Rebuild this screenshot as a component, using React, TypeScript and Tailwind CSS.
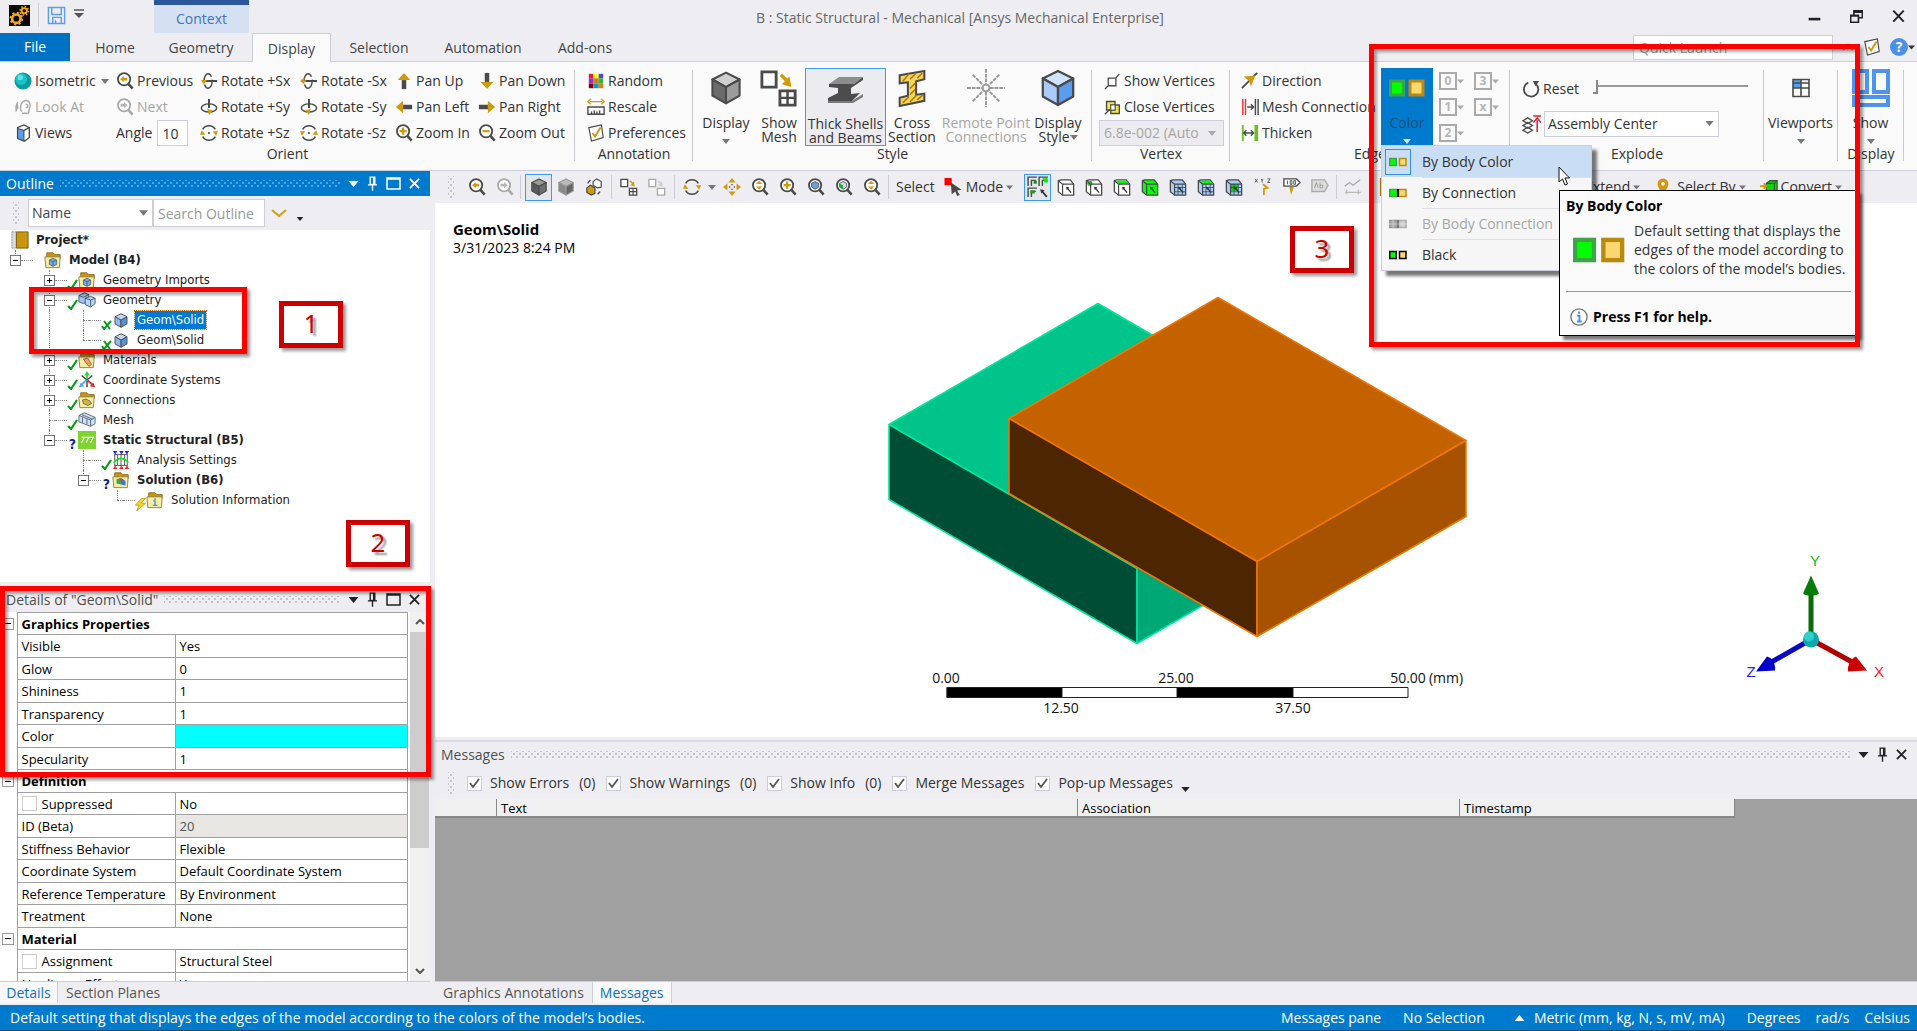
import type { ReactNode } from "react";
import clsx from "clsx";

/* ---------- icons ---------- */

type SvgProps = { className?: string; children: ReactNode; box?: string };

function Svg({ className = "size-[18px]", children, box = "0 0 20 20" }: SvgProps) {
  return (
    <svg viewBox={box} className={clsx("shrink-0", className)} fill="none" aria-hidden="true">
      {children}
    </svg>
  );
}

function Caret({ className = "h-[6px] w-[9px] text-[#777]" }: { className?: string }) {
  return (
    <svg viewBox="0 0 10 6" className={clsx("shrink-0", className)} aria-hidden="true">
      <path d="M0 0h10L5 6z" fill="currentColor" />
    </svg>
  );
}

const GOLD = "#cf9b0e";
const DARK = "#4a4a4a";

function Lens({ kind, muted, className }: { kind: string; muted?: boolean; className?: string }) {
  const ink = muted ? "#a8a8a8" : DARK;
  const gold = muted ? "#b5b5b5" : GOLD;
  return (
    <Svg className={className}>
      <circle cx="9" cy="8" r="6.8" stroke={ink} strokeWidth="2" fill="#fff" />
      <path d="M13.500 13l5 5.500" stroke={ink} strokeWidth="2.800" />
      {kind === "back" && <path d="M4.500 8l4-3.500v2h4v3h-4v2z" fill={gold} />}
      {kind === "next" && <path d="M13 8L9 4.500v2H5v3h4v2z" fill={gold} />}
      {kind === "plus" && <path d="M9 4v8M5 8h8" stroke={gold} strokeWidth="2.400" />}
      {kind === "minus" && <path d="M5 8h8" stroke={gold} strokeWidth="2.400" />}
      {kind === "updown" && <path d="M9 3l3.500 3.600h-7zM9 13l3.500-3.600h-7z" fill={gold} />}
      {kind === "blue" && <path d="M9 4l4 2v4l-4 2.500L5 10V6z" fill="#6f9fd8" stroke="#456" />}
      {kind === "green" && (
        <>
          <path d="M9 4l4 2v4l-4 2.500L5 10V6z" fill="#ddd" stroke="#456" />
          <path d="M5 6l4 2v4.500L5 10z" fill="#1fae3b" />
        </>
      )}
    </Svg>
  );
}

function Cube({
  top,
  left,
  right,
  stroke = DARK,
  className,
}: {
  top: string;
  left: string;
  right: string;
  stroke?: string;
  className?: string;
}) {
  return (
    <Svg className={className}>
      <g stroke={stroke} strokeWidth="1.200" strokeLinejoin="round">
        <path d="M10 1l8 4-8 4.500L2 5z" fill={top} />
        <path d="M2 5l8 4.500V19l-8-4.500z" fill={left} />
        <path d="M18 5l-8 4.500V19l8-4.500z" fill={right} />
      </g>
    </Svg>
  );
}

function Rotate({ axis, flip }: { axis: "x" | "y" | "z"; flip?: boolean }) {
  return (
    <Svg className="h-[20px] w-[18px]">
      {axis === "x" && (
        <>
          <ellipse cx="9" cy="10" rx="4.500" ry="8" stroke={DARK} strokeWidth="1.600" strokeDasharray="16 3" />
          <path d="M6 10h13" stroke={DARK} strokeWidth="2.200" />
          <path d={flip ? "M0 10l5-4v8z" : "M1 9h7l-4 5z"} fill={GOLD} />
        </>
      )}
      {axis === "y" && (
        <>
          <ellipse cx="10" cy="11" rx="8.500" ry="4.500" stroke={DARK} strokeWidth="1.600" />
          <path d="M10 1v10" stroke={DARK} strokeWidth="2.200" />
          <path d={flip ? "M10 19l-4-5 6-2z" : "M10 19l4-5-6-2z"} fill={GOLD} />
        </>
      )}
      {axis === "z" && (
        <>
          <path d="M3 6a8 8 0 0 1 14 0M17 14a8 8 0 0 1-14 0" stroke={DARK} strokeWidth="1.800" />
          <path d={flip ? "M0 8h6l-4 5zM20 12h-6l4-5z" : "M0 12h6L2 7zM20 8h-6l4 5z"} fill={GOLD} />
          <circle cx="10" cy="10" r="1.200" fill={DARK} />
        </>
      )}
    </Svg>
  );
}

function PanArrow({ turn }: { turn: "up" | "down" | "left" | "right" }) {
  return (
    <Svg
      className={clsx(
        "size-[18px]",
        turn === "down" && "rotate-180",
        turn === "left" && "-rotate-90",
        turn === "right" && "rotate-90",
      )}
    >
      <path d="M10 1l7 8H3z" fill={GOLD} />
      <path d="M7.500 9h5v10h-5z" fill={DARK} />
    </Svg>
  );
}

function MeshSquares({ muted, className }: { muted?: boolean; className?: string }) {
  const ink = muted ? "#aaa" : DARK;
  return (
    <Svg className={className}>
      <path d="M1 1.500h7.500v8H1zM10.500 11.500h8v7.500h-8z" stroke={ink} strokeWidth="1.500" fill="#fff" />
      {!muted && <path d="M14.500 11.500V19M10.500 15.200h8" stroke={ink} strokeWidth="1.300" />}
      <path d="M11 3l4 4" stroke={muted ? "#ccc" : GOLD} strokeWidth="1.800" />
      <path d="M16.500 9.500l-5-1.500 4-4z" fill={muted ? "#ccc" : GOLD} />
    </Svg>
  );
}

function Swatches({ className, kind = "body" }: { className?: string; kind?: string }) {
  const muted = kind === "muted";
  const joined = kind === "connection" || muted;
  const greenEdge = kind === "black" ? "#000" : muted ? "#999" : "#3fa447";
  const goldEdge = kind === "black" ? "#000" : muted ? "#aaa" : "#b78a12";
  return (
    <Svg className={className} box="0 0 36 18">
      <rect x="1.500" y="2" width={joined ? 15 : 13} height="14" fill={muted ? "#aaa" : "#0f0"} stroke={greenEdge} strokeWidth="3" />
      <rect x={joined ? 19 : 21} y="2" width={joined ? 15 : 13} height="14" fill={muted ? "#ccc" : "#fbd76f"} stroke={goldEdge} strokeWidth="3" />
      {joined && <path d="M18 1v16" stroke={muted ? "#777" : "#000"} strokeWidth="4" />}
      {muted && <path d="M0 9h36M8 1v16M28 1v16" stroke="#eee" />}
    </Svg>
  );
}

function Folder({ children }: { children?: ReactNode }) {
  return (
    <Svg className="size-[18px]">
      <path d="M3 5V2h7l2 2h6v4H3z" fill="#c9950f" stroke="#8d6b15" />
      <path d="M1 6.500h17l-1 12H2z" fill="#f8eda4" stroke="#8c7a3c" />
      {children}
    </Svg>
  );
}

const smallCube = (
  <g stroke="#3c5878" strokeWidth=".8">
    <path d="M10 8l4 2v5l-4 2-4-2v-5z" fill="#79a9e0" />
    <path d="M6 10l4 2 4-2M10 12v5" />
  </g>
);

function Pin({ className }: { className?: string }) {
  return (
    <Svg className={className} box="0 0 12 16">
      <path d="M3.500 1h5v8h-5zM1 9.500h10M6 10v6" stroke="currentColor" strokeWidth="1.500" />
      <path d="M7.500 1v8" stroke="currentColor" strokeWidth="2" />
    </Svg>
  );
}

/* ---------- shared bits ---------- */

const dots =
  "bg-[radial-gradient(currentColor_1px,transparent_1px),radial-gradient(currentColor_1px,transparent_1px)] bg-[length:6px_6px] bg-[position:0_0,3px_3px]";

function Grip() {
  return <span className={clsx("h-[22px] w-[6px] shrink-0 text-[#c2c2c8]", dots)} />;
}

function PanelHeader({ title, active, square = true }: { title: string; active?: boolean; square?: boolean }) {
  return (
    <div
      className={clsx(
        "flex h-[25px] shrink-0 items-center pr-[10px] pl-[6px]",
        active ? "bg-[#007acc] text-white" : "bg-[#eeeef2] text-[#222]",
      )}
    >
      <h2 className={active ? "" : "text-[#505050]"}>{title}</h2>
      <span className={clsx("mx-[6px] h-[8px] flex-1", active ? "text-[#4ea6e0]" : "text-[#c4c4c8]", dots)} />
      <div className="flex items-center gap-[8px] pl-[2px]">
        <button aria-label="Window position">
          <Caret className="h-[6px] w-[11px]" />
        </button>
        <button aria-label="Auto hide">
          <Pin className="h-[15px] w-[11px]" />
        </button>
        {square && (
          <button aria-label="Maximize">
            <Svg className="h-[13px] w-[15px]" box="0 0 15 13">
              <path d="M1 1h13v11H1zM1 2h13" stroke="currentColor" strokeWidth="1.500" />
            </Svg>
          </button>
        )}
        <button aria-label="Close">
          <Svg className="size-[11px]" box="0 0 12 12">
            <path d="M1 1l10 10M11 1L1 11" stroke="currentColor" strokeWidth="2" />
          </Svg>
        </button>
      </div>
    </div>
  );
}

/* ---------- ribbon ---------- */

function RibbonItem({ icon, label, muted, caret }: { icon: ReactNode; label: string; muted?: boolean; caret?: boolean }) {
  return (
    <button className={clsx("flex h-[26px] items-center gap-[3px] whitespace-nowrap", muted && "text-[#a6a6a6]")}>
      {icon}
      <span>{label}</span>
      {caret && <Caret className="ml-[2px] h-[5px] w-[8px] text-[#777]" />}
    </button>
  );
}

function Group({ label, className, children }: { label: string; className: string; children: ReactNode }) {
  return (
    <section className={clsx("relative flex shrink-0 flex-col pt-[6px]", className)}>
      <div className="flex h-[78px]">{children}</div>
      <div className="text-center leading-[16px]">{label}</div>
      <span className="absolute top-[8px] right-0 h-[91px] w-px bg-[#c9c9cd]" />
    </section>
  );
}

function BigButton({
  icon,
  lines,
  className,
  caret,
}: {
  icon: ReactNode;
  lines: string[];
  className: string;
  caret?: "below" | "inline";
}) {
  return (
    <button className={clsx("flex h-[78px] shrink-0 flex-col items-center leading-[14px] whitespace-nowrap", className)}>
      <span className="flex h-[48px] items-center pb-[8px]">{icon}</span>
      {lines.map((line, i) => (
        <span key={line} className="flex items-center">
          {line}
          {caret === "inline" && i === lines.length - 1 && <Caret className="h-[5px] w-[8px] text-[#777]" />}
        </span>
      ))}
      {caret === "below" && <Caret className="mt-[9px] h-[5px] w-[8px]" />}
    </button>
  );
}

const orient: { icon: ReactNode; label: string; muted?: boolean; caret?: boolean }[] = [
  {
    icon: (
      <Svg>
        <circle cx="10" cy="10" r="9.500" fill="#0b9ba0" />
        <circle cx="8" cy="8" r="6.500" fill="#18c4c6" />
        <circle cx="7" cy="6" r="3" fill="#5fe4e2" />
      </Svg>
    ),
    label: "Isometric",
    caret: true,
  },
  { icon: <Lens kind="back" />, label: "Previous" },
  { icon: <Rotate axis="x" />, label: "Rotate +Sx" },
  { icon: <Rotate axis="x" flip />, label: "Rotate -Sx" },
  { icon: <PanArrow turn="up" />, label: "Pan Up" },
  { icon: <PanArrow turn="down" />, label: "Pan Down" },
  {
    icon: (
      <Svg>
        <path d="M4 4c-3 3-3 8-2 12l3-5z" fill="#aaa" />
        <path d="M9 15c-3-2-2-11 3-12 6-1 7 5 5 9l-1 5H9M13 7c3 0 3 4 0 4" stroke="#aaa" strokeWidth="1.600" />
      </Svg>
    ),
    label: "Look At",
    muted: true,
  },
  { icon: <Lens kind="next" muted />, label: "Next", muted: true },
  { icon: <Rotate axis="y" />, label: "Rotate +Sy" },
  { icon: <Rotate axis="y" flip />, label: "Rotate -Sy" },
  { icon: <PanArrow turn="left" />, label: "Pan Left" },
  { icon: <PanArrow turn="right" />, label: "Pan Right" },
  {
    icon: (
      <Svg>
        <path d="M4 4l7-3 6 3v11l-5 4-8-3z" fill="#fff" stroke={DARK} strokeWidth="1.500" />
        <path d="M4 5l7 2v12l-7-3z" fill="#5b9df0" stroke={DARK} strokeWidth="1.200" />
        <path d="M11 7l6-3" stroke={DARK} strokeWidth="1.500" />
      </Svg>
    ),
    label: "Views",
  },
];

const orientLast: { icon: ReactNode; label: string }[] = [
  { icon: <Rotate axis="z" />, label: "Rotate +Sz" },
  { icon: <Rotate axis="z" flip />, label: "Rotate -Sz" },
  { icon: <Lens kind="plus" />, label: "Zoom In" },
  { icon: <Lens kind="minus" />, label: "Zoom Out" },
];

function CheckSheet() {
  return (
    <Svg>
      <path d="M2 4l14-3 2 14-13 4z" fill="#fff" stroke={DARK} strokeWidth="1.300" />
      <path d="M6 10l3 4 6-10" stroke={GOLD} strokeWidth="2.200" />
    </Svg>
  );
}

function Ribbon() {
  const edgeSlots = ["0", "3", "1", "x", "2"];
  return (
    <div className="flex h-[109px] shrink-0 overflow-hidden border-b border-[#cccedb] bg-[#fafafa] text-[#333]">
      <Group label="Orient" className="w-[575px]">
        <div className="grid grid-cols-[102px_84px_100px_95px_83px_96px] pl-[14px]">
          {orient.map((o) => (
            <RibbonItem key={o.label} {...o} />
          ))}
          <label className="flex h-[26px] items-center gap-[5px]">
            Angle
            <input defaultValue="10" className="h-[26px] w-[31px] border border-[#cccedb] bg-white px-[4px]" />
          </label>
          {orientLast.map((o) => (
            <RibbonItem key={o.label} {...o} />
          ))}
        </div>
      </Group>

      <Group label="Annotation" className="w-[118px]">
        <div className="pl-[12px]">
          <RibbonItem
            label="Random"
            icon={
              <Svg>
                <path d="M2 2h5v5H2z" fill="#e8173c" />
                <path d="M7 2h6v5H7z" fill="#ff0" />
                <path d="M13 2h5v5h-5z" fill="#4a4adf" />
                <path d="M2 7h5v6H2z" fill="#9a2fb8" />
                <path d="M7 7h6v6H7z" fill="#c9801c" />
                <path d="M13 7h5v6h-5z" fill="#2fb53a" />
                <path d="M2 13h5v5H2z" fill="#7c0010" />
                <path d="M7 13h6v5H7z" fill="#1799b4" />
                <path d="M13 13h5v5h-5z" fill="#e57b1c" />
              </Svg>
            }
          />
          <RibbonItem
            label="Rescale"
            icon={
              <Svg>
                <path d="M3 4h14M4 1L1 4l3 3M16 1l3 3-3 3" stroke={GOLD} strokeWidth="1.500" />
                <path d="M1 10h18v8H1zM5 18v-3M8 18v-4M11 18v-3M14 18v-4" stroke={DARK} strokeWidth="1.500" />
              </Svg>
            }
          />
          <RibbonItem label="Preferences" icon={<CheckSheet />} />
        </div>
      </Group>

      <Group label="Style" className="w-[399px] [&>div:first-child]:pl-[6px]">
        <BigButton
          className="w-[54px] [&>svg]:text-[#777]"
          lines={["Display"]}
          caret="below"
          icon={<Cube className="h-[36px] w-[34px]" top="#cfcfcf" left="#6b6b6b" right="#9c9c9c" />}
        />
        <BigButton className="w-[52px]" lines={["Show", "Mesh"]} icon={<MeshSquares className="size-[38px]" />} />
        <BigButton
          className="w-[81px] border border-[#3d9bf5] bg-[#ececf0]"
          lines={["Thick Shells", "and Beams"]}
          icon={
            <Svg className="h-[30px] w-[38px]" box="0 0 38 28">
              <path d="M2 9L12 2h24L27 9z" fill="#8d8d8d" />
              <path d="M2 9h25l9-7v3l-12 8v6l9-1-8 8H1v-3l10-5v-5L2 12z" fill="#4c4c4c" />
              <path d="M25 26l11-7v3l-10 6H1v-2z" fill="#7a7a7a" />
            </Svg>
          }
        />
        <BigButton
          className="w-[52px]"
          lines={["Cross", "Section"]}
          icon={
            <Svg className="h-[37px] w-[30px]" box="0 0 28 36">
              <path d="M2 5l24-4v8l-8 2v13l8-1v7L2 35v-8l8-2V12l-8 1z" fill="#f5d558" stroke={DARK} strokeWidth="2" />
              <path d="M5 11l6-7M12 9l6-6M19 8l5-5M12 18l5-5M12 24l5-5M5 32l6-6M12 31l6-6M19 29l6-5" stroke="#a97a10" strokeWidth="1.500" />
            </Svg>
          }
        />
        <BigButton
          className="w-[96px] text-[#a6a6a6]"
          lines={["Remote Point", "Connections"]}
          icon={
            <Svg className="size-[38px]">
              <g stroke="#999" strokeDasharray="2 .5">
                <path d="M10 0v8M10 12v8M0 10h8M12 10h8M3 3l5.500 5.500M17 3l-5.500 5.500M3 17l5.500-5.500M17 17l-5.500-5.500" />
              </g>
              <circle cx="10" cy="10" r="1.800" stroke="#999" />
            </Svg>
          }
        />
        <BigButton
          className="w-[48px]"
          lines={["Display", "Style"]}
          caret="inline"
          icon={<Cube className="h-[38px] w-[38px]" top="#cfe4ff" left="#a9ccfb" right="#5a9cf0" />}
        />
      </Group>

      <Group label="Vertex" className="w-[138px]">
        <div className="pl-[7px]">
          <div className="pl-[5px]">
            <RibbonItem
              label="Show Vertices"
              icon={
                <Svg className="size-[17px]">
                  <path d="M5 6h9v9H5zM14 6l4-5M5 15l-4 4" stroke={DARK} strokeWidth="1.500" />
                </Svg>
              }
            />
            <RibbonItem
              label="Close Vertices"
              icon={
                <Svg className="size-[17px]">
                  <path d="M3 3h10v10H3zM8 7h10v10H8z" fill="#f5ea3c" stroke={DARK} strokeWidth="1.600" />
                  <path d="M8 7h5v6H8z" fill="#fff" stroke={DARK} />
                  <path d="M1 18l5-5" stroke={DARK} strokeWidth="1.500" />
                </Svg>
              }
            />
          </div>
          <div className="relative h-[26px] w-[125px]">
            <select
              disabled
              aria-label="Vertex size"
              className="h-full w-full appearance-none border border-[#cccedb] bg-[#ececf0] pl-[4px] text-[#a6a6a6] opacity-100"
            >
              <option>6.8e-002 (Auto S</option>
            </select>
            <span className="absolute top-px right-px flex h-[24px] w-[22px] items-center justify-center bg-[#ececf0]">
              <Caret className="h-[5px] w-[8px] text-[#aaa]" />
            </span>
          </div>
        </div>
      </Group>

      <Group label="Edge" className="w-[280px]">
        <div className="w-[151px] pl-[11px]">
          <RibbonItem
            label="Direction"
            icon={
              <Svg>
                <path d="M1 18L18 1" stroke={DARK} strokeWidth="2" />
                <path d="M3 5l13-1-5 12-2-6z" fill={GOLD} />
              </Svg>
            }
          />
          <RibbonItem
            label="Mesh Connection"
            icon={
              <Svg>
                <path d="M2 1v18M5 1v18" stroke="#e33" strokeWidth="1.600" />
                <path d="M7 10h7M11 7l3 3-3 3M16 1v18M19 1v18" stroke={DARK} strokeWidth="1.600" />
              </Svg>
            }
          />
          <RibbonItem
            label="Thicken"
            icon={
              <Svg>
                <path d="M2 1v18" stroke="#6cbf1f" strokeWidth="2" />
                <path d="M17 1v18" stroke="#6cbf1f" strokeWidth="4" />
                <path d="M4 10h9M6 7l-3 3 3 3M11 7l3 3-3 3" stroke={DARK} strokeWidth="1.500" />
              </Svg>
            }
          />
        </div>
        <BigButton
          className="w-[52px] bg-[#007acc] text-[#1d4f7a] [&>svg]:text-[#d5e6f5]"
          lines={["Color"]}
          caret="below"
          icon={<Swatches className="h-[18px] w-[36px]" />}
        />
        <div className="grid h-[78px] grid-cols-[35px_35px] pl-[6px]">
          {edgeSlots.map((s) => (
            <button key={s} className="flex items-center text-[12px] font-bold text-[#b5b5b5]">
              <span className="flex size-[18px] items-center justify-center border-2 border-[#aaa]">{s}</span>
              <Caret className="h-[5px] w-[7px] text-[#aaa]" />
            </button>
          ))}
        </div>
      </Group>

      <Group label="Explode" className="w-[254px]">
        <div className="flex flex-col gap-[13px] pt-[12px] pl-[12px]">
          <div className="flex items-center gap-[14px]">
            <button className="flex items-center gap-[3px]">
              <Svg className="size-[18px]">
                <path d="M7 3a8 8 0 1 0 8 1" stroke={DARK} strokeWidth="2" />
                <path d="M12 1h7l-4 6z" fill={DARK} />
              </Svg>
              Reset
            </button>
            <div className="relative h-[18px] w-[155px]">
              <input
                type="range"
                aria-label="Explode factor"
                defaultValue={0}
                className="absolute inset-0 w-full appearance-none bg-transparent [&::-webkit-slider-runnable-track]:h-[18px] [&::-webkit-slider-runnable-track]:bg-[linear-gradient(#999,#999)] [&::-webkit-slider-runnable-track]:bg-[length:100%_2px] [&::-webkit-slider-runnable-track]:bg-[position:0_5px] [&::-webkit-slider-runnable-track]:bg-no-repeat [&::-webkit-slider-thumb]:h-[14px] [&::-webkit-slider-thumb]:w-[5px] [&::-webkit-slider-thumb]:appearance-none [&::-webkit-slider-thumb]:border-r-2 [&::-webkit-slider-thumb]:border-b-2 [&::-webkit-slider-thumb]:border-[#888] [&::-webkit-slider-thumb]:bg-[#fafafa]"
              />
            </div>
          </div>
          <div className="flex items-center gap-[3px]">
            <Svg className="size-[19px]">
              <path d="M1 6l5-3 5 3-5 3zM1 11l5-3 5 3-5 3zM1 16l5-3 5 3-5 3z" stroke={DARK} strokeWidth="1.400" />
              <path d="M16 5v13M12 8l4-5 4 5M12 1h8" stroke="#d8213b" strokeWidth="1.600" />
            </Svg>
            <div className="relative h-[26px] w-[175px]">
              <select aria-label="Explode origin" className="h-full w-full appearance-none border border-[#cccedb] bg-white pl-[3px]">
                <option>Assembly Center</option>
              </select>
              <Caret className="pointer-events-none absolute top-[10px] right-[5px] h-[5px] w-[9px] text-[#777]" />
            </div>
          </div>
        </div>
      </Group>

      <Group label="" className="w-[74px]">
        <BigButton
          className="w-[73px] [&>svg]:text-[#777]"
          lines={["Viewports"]}
          caret="below"
          icon={
            <Svg className="size-[20px]">
              <path d="M2 2h8v8H2z" fill="#4aa3f5" />
              <path d="M2 1.500h16v17H2zM10 2v16M2 10h16M2 5h16" stroke={DARK} strokeWidth="1.600" />
            </Svg>
          }
        />
      </Group>

      <Group label="Display" className="w-[66px]">
        <BigButton
          className="w-[65px] [&>svg]:text-[#777]"
          lines={["Show"]}
          caret="below"
          icon={
            <Svg className="h-[38px] w-[38px]" box="0 0 38 38">
              <path d="M2 2h13v21H2zM22 2h14v21H22zM2 28h34v8H2z" stroke="#4d94ee" strokeWidth="4" />
            </Svg>
          }
        />
      </Group>
    </div>
  );
}

/* ---------- title bar and tabs ---------- */

function TitleBar() {
  return (
    <header className="flex h-[33px] shrink-0 items-start bg-[#eeeef2]">
      <div className="flex w-[154px] items-center gap-[8px] pt-[3px] pl-[9px]">
        <Svg className="size-[21px]">
          <path d="M0 0h20v20H0z" fill="#0a0a0a" />
          <circle cx="7" cy="13" r="4" stroke="#f5a81c" strokeWidth="2.500" />
          <circle cx="7" cy="13" r="5.500" stroke="#f5a81c" strokeWidth="2" strokeDasharray="2 2.300" />
          <circle cx="14.500" cy="5.500" r="2.500" stroke="#f5a81c" strokeWidth="1.800" />
          <circle cx="14.500" cy="5.500" r="4" stroke="#f5a81c" strokeWidth="1.500" strokeDasharray="1.500 1.600" />
        </Svg>
        <span className="h-[24px] w-px bg-[#cccedb]" />
        <button aria-label="Save">
          <Svg className="size-[19px]">
            <path d="M1.500 1.500h17v17h-17zM5 2v7h10V2M6 18v-6h9v6M9 18v-3" stroke="#5b9bf2" strokeWidth="1.500" />
          </Svg>
        </button>
        <button aria-label="Customize quick access" className="pb-[4px]">
          <Svg className="h-[9px] w-[10px]" box="0 0 10 9">
            <path d="M0 1h10" stroke="#555" strokeWidth="1.500" />
            <path d="M0 4h10L5 9z" fill="#555" />
          </Svg>
        </button>
      </div>
      <div className="flex h-[33px] w-[95px] items-center justify-center border-t-[5px] border-[#2b579a] bg-[#d5e1f2] text-[#4472c4]">
        Context
      </div>
      <h1 className="flex-1 pt-[9px] pr-[54px] text-center text-[#666]">
        B : Static Structural - Mechanical [Ansys Mechanical Enterprise]
      </h1>
      <div className="flex w-[192px] items-center justify-end gap-[29px] pt-[10px] pr-[12px] text-[#222]">
        <button aria-label="Minimize">
          <Svg className="size-[13px]">
            <path d="M1 14h18" stroke="currentColor" strokeWidth="4" />
          </Svg>
        </button>
        <button aria-label="Restore">
          <Svg className="size-[13px]">
            <path d="M1 8h12v11H1zM6 8V1h13v11h-6" stroke="currentColor" strokeWidth="2.500" />
            <path d="M1 9h12M6 3h13" stroke="currentColor" strokeWidth="3" />
          </Svg>
        </button>
        <button aria-label="Close">
          <Svg className="size-[13px]">
            <path d="M2 1l16 17M18 1L2 18" stroke="currentColor" strokeWidth="3" />
          </Svg>
        </button>
      </div>
    </header>
  );
}

const tabs = [
  { label: "Home", width: "ml-[10px] w-[70px]" },
  { label: "Geometry", width: "w-[102px]" },
  { label: "Display", width: "w-[79px]" },
  { label: "Selection", width: "w-[96px]" },
  { label: "Automation", width: "w-[112px]" },
  { label: "Add-ons", width: "w-[92px]" },
];

function TabRow() {
  return (
    <nav className="flex h-[29px] shrink-0 border-b border-[#cccedb] bg-[#eeeef2]">
      <button className="w-[70px] bg-[#0072c6] text-white">File</button>
      {tabs.map((t) => (
        <button
          key={t.label}
          className={clsx(
            "pt-[2px]",
            t.width,
            t.label === "Display" ? "h-[29px] border border-b-0 border-[#cccedb] bg-[#fafafa]" : "h-[28px]",
          )}
        >
          {t.label}
        </button>
      ))}
      <div className="ml-auto flex items-center gap-[9px] pr-[2px]">
        <input
          aria-label="Quick Launch"
          placeholder="Quick Launch"
          className="h-[25px] w-[200px] border border-[#cccedb] bg-white px-[5px] placeholder:text-[#999]"
        />
        <Svg className="h-[8px] w-[12px]" box="0 0 12 8">
          <path d="M1 7l5-5 5 5" stroke={GOLD} strokeWidth="2" />
        </Svg>
        <button aria-label="Options">
          <CheckSheet />
        </button>
        <button aria-label="Help" className="flex items-center">
          <span className="flex size-[18px] items-center justify-center rounded-full bg-[#4a90e8] font-bold text-white">?</span>
          <Caret className="h-[5px] w-[7px] text-[#333]" />
        </button>
      </div>
    </nav>
  );
}

/* ---------- outline tree ---------- */

type TreeRow = {
  label: string;
  level: 0 | 1 | 2 | 3 | 4;
  box?: "+" | "-";
  status?: "ok" | "okx" | "ask" | "bolt";
  icon: ReactNode;
  bold?: boolean;
  selected?: boolean;
  guides: string[];
};

const blueCube = <Cube className="h-[15px] w-[16px]" top="#bfd8f8" left="#8db8f0" right="#5a90d8" />;
const twoCubes = (
  <Svg className="size-[18px]">
    <g stroke="#445566" strokeWidth="1">
      <path d="M1 5l6-3 5 2v7l-6 3-5-2z" fill="#9fc3ee" />
      <path d="M8 8l6-2 5 2v6l-5 4-6-3z" fill="#b9d4f5" />
      <path d="M8 8l6 2 5-2M14 10v7M1 5l5 2 6-3" />
    </g>
  </Svg>
);
const meshedBlocks = (
  <Svg className="size-[18px]">
    <g stroke="#556677" strokeWidth="1">
      <path d="M1 5l6-3 12 5v7l-5 3-13-5z" fill="#cfe0f5" />
      <path d="M1 5l13 5 5-3M14 10v7M5 7v6M10 9v6M4 4l12 5" />
    </g>
  </Svg>
);

const L1 = "left-[15px]";
const L2 = "left-[49px]";
const L3 = "left-[83px]";
const L4 = "left-[117px]";
const full = "top-0 h-[20px]";
const half = "top-0 h-[10px]";

const tree: TreeRow[] = [
  {
    label: "Project*",
    level: 0,
    bold: true,
    guides: [],
    icon: (
      <Svg className="size-[18px]">
        <path d="M1 1h5v18H1z" fill="#ddd" stroke="#888" strokeDasharray="2 1" />
        <path d="M6 1h13v18H6z" fill="#c9950f" stroke="#77570c" />
      </Svg>
    ),
  },
  { label: "Model (B4)", level: 1, box: "-", bold: true, guides: [clsx(L1, half)], icon: <Folder>{smallCube}</Folder> },
  { label: "Geometry Imports", level: 2, box: "+", status: "ok", guides: [clsx(L2, full)], icon: <Folder>{smallCube}</Folder> },
  { label: "Geometry", level: 2, box: "-", status: "ok", guides: [clsx(L2, full)], icon: twoCubes },
  { label: "Geom\\Solid", level: 3, status: "okx", selected: true, guides: [clsx(L2, full), clsx(L3, full)], icon: blueCube },
  { label: "Geom\\Solid", level: 3, status: "okx", guides: [clsx(L2, full), clsx(L3, half)], icon: blueCube },
  {
    label: "Materials",
    level: 2,
    box: "+",
    status: "ok",
    guides: [clsx(L2, full)],
    icon: (
      <Folder>
        <path d="M6 9l5-1 4 7-3 2z" fill="#e8a55c" stroke="#a55" />
      </Folder>
    ),
  },
  {
    label: "Coordinate Systems",
    level: 2,
    box: "+",
    status: "ok",
    guides: [clsx(L2, full)],
    icon: (
      <Svg className="size-[18px]">
        <path d="M10 10L4 5M10 10l6-5M10 10v8" stroke="#444" strokeWidth="1.600" />
        <path d="M10 9V3" stroke="#1edb3a" strokeWidth="2" />
        <path d="M10 0l3 5H7z" fill="#1edb3a" />
        <path d="M10 10l6 5" stroke="#e22" strokeWidth="2" />
        <path d="M19 18l-6-1 4-4z" fill="#e22" />
        <path d="M10 10l-6 5" stroke="#5aa0f8" strokeWidth="2" />
        <path d="M1 18l6-1-4-4z" fill="#5aa0f8" />
      </Svg>
    ),
  },
  {
    label: "Connections",
    level: 2,
    box: "+",
    status: "ok",
    guides: [clsx(L2, full)],
    icon: (
      <Folder>
        <path d="M5 10l4-1 4 2 2 3-4 2-5-2z" fill="#d8b23c" stroke="#665" />
      </Folder>
    ),
  },
  {
    label: "Mesh",
    level: 2,
    status: "ok",
    guides: [clsx(L2, full)],
    icon: meshedBlocks,
  },
  {
    label: "Static Structural (B5)",
    level: 2,
    box: "-",
    status: "ask",
    bold: true,
    guides: [clsx(L2, half)],
    icon: (
      <Svg className="size-[18px]">
        <path d="M0 0h20v20H0z" fill="#7fd32f" />
        <path d="M4 7h14M7 7l-3 6M12 7l-3 6M17 7l-3 6" stroke="#fff" strokeWidth="1.300" />
      </Svg>
    ),
  },
  {
    label: "Analysis Settings",
    level: 3,
    status: "ok",
    guides: [clsx(L3, full)],
    icon: (
      <Svg className="size-[18px]">
        <path d="M3 3v14M10 3v14M17 3v14M3 4h14M3 16h14M6 4v12M14 4v12" stroke={DARK} />
        <path d="M2 13c4-6 12-6 16 0" stroke="#2d2" strokeWidth="1.800" />
        <path d="M1 0h5L3.500 4zM8 0h5l-2.500 4zM14 0h5l-2.500 4z" fill="#22f" />
        <path d="M1 20h5l-2.500-4zM8 20h5l-2.500-4zM14 20h5l-2.500-4z" fill="#f22" />
      </Svg>
    ),
  },
  {
    label: "Solution (B6)",
    level: 3,
    box: "-",
    status: "ask",
    bold: true,
    guides: [clsx(L3, half)],
    icon: (
      <Folder>
        <path d="M5 9l5-1v7l-5-1z" fill="#2fae4d" />
        <path d="M10 8l5 3v5l-5-1z" fill="#3f6fd8" />
        <path d="M8 8l5 1-3 3z" fill="#e33" />
      </Folder>
    ),
  },
  {
    label: "Solution Information",
    level: 4,
    status: "bolt",
    guides: [clsx(L4, half)],
    icon: (
      <Folder>
        <path d="M10 8v2M8 11h2v5M7.500 16h5" stroke="#4a90e8" strokeWidth="1.600" />
      </Folder>
    ),
  },
];

const indent = ["pl-[11px]", "pl-[10px]", "pl-[44px]", "pl-[78px]", "pl-[112px]"];

function Status({ kind }: { kind?: TreeRow["status"] }) {
  return (
    <span className="mt-[8px] flex w-[11px] shrink-0 justify-center">
      {kind === "ok" && (
        <Svg className="size-[11px]" box="0 0 11 11">
          <path d="M1 7l3 3L10 1" stroke="#0a9a1a" strokeWidth="2.200" />
        </Svg>
      )}
      {kind === "okx" && (
        <Svg className="size-[11px]" box="0 0 11 11">
          <path d="M1 7l2 3 7-8M3 2l6 8" stroke="#0a9a1a" strokeWidth="2" />
        </Svg>
      )}
      {kind === "ask" && <b className="text-[14px] leading-[12px] text-[#0a2a8c]">?</b>}
      {kind === "bolt" && (
        <Svg className="size-[13px]">
          <path d="M12 0L2 11h6l-4 9L18 8h-7l7-8z" fill="#fbd21c" stroke="#b58a10" />
        </Svg>
      )}
    </span>
  );
}

function Outline() {
  return (
    <section className="flex min-h-0 flex-1 flex-col bg-white">
      <PanelHeader title="Outline" active />
      <div className="flex h-[34px] shrink-0 items-center bg-[#eeeef2] pl-[13px]">
        <Grip />
        <div className="relative ml-[9px] h-[28px] w-[125px]">
          <select aria-label="Filter by" className="h-full w-full appearance-none border border-[#cccedb] bg-white pl-[3px]">
            <option>Name</option>
          </select>
          <Caret className="pointer-events-none absolute top-[11px] right-[5px] h-[6px] w-[9px] text-[#777]" />
        </div>
        <input
          aria-label="Search Outline"
          placeholder="Search Outline"
          className="h-[28px] w-[112px] border border-[#cccedb] bg-white px-[4px] placeholder:text-[#999]"
        />
        <Svg className="ml-[6px] h-[9px] w-[16px]" box="0 0 16 9">
          <path d="M1 1l7 6 7-6" stroke="#d2a21c" strokeWidth="2.200" />
        </Svg>
        <Caret className="mt-[12px] ml-[9px] h-[4px] w-[8px] text-[#222]" />
      </div>
      <ul className="text-[13px] text-[#222] font-['DejaVu_Sans_Condensed','DejaVu_Sans',sans-serif]">
        {tree.map((row, i) => (
          <li key={i} className={clsx("relative flex h-[20px] items-center", indent[row.level])}>
            {row.guides.map((g) => (
              <span key={g} className={clsx("absolute border-l border-dotted border-[#888]", g)} />
            ))}
            {row.level > 0 && (
              <>
                {row.box ? (
                  <button className="relative flex size-[11px] shrink-0 items-center justify-center border border-[#777] bg-white" aria-label="Toggle">
                    <span className="absolute h-px w-[5px] bg-black" />
                    {row.box === "+" && <span className="absolute h-[5px] w-px bg-black" />}
                  </button>
                ) : (
                  <span className="ml-[5px] w-[6px] shrink-0 border-t border-dotted border-[#888]" />
                )}
                <span className="w-[12px] shrink-0 border-t border-dotted border-[#888]" />
                <Status kind={row.status} />
              </>
            )}
            <span className="flex w-[18px] shrink-0 justify-center">{row.icon}</span>
            <span
              className={clsx(
                "ml-[5px] px-[2px] leading-[18px] whitespace-nowrap",
                row.bold && "font-bold",
                row.selected && "bg-[#0078d7] text-white outline-1 outline-dotted outline-[#c60]",
              )}
            >
              {row.label}
            </span>
          </li>
        ))}
      </ul>
    </section>
  );
}

/* ---------- details ---------- */

type Prop = { name: string; value?: string; check?: boolean; tone?: string };

const props: Prop[] = [
  { name: "Graphics Properties" },
  { name: "Visible", value: "Yes" },
  { name: "Glow", value: "0" },
  { name: "Shininess", value: "1" },
  { name: "Transparency", value: "1" },
  { name: "Color", value: "", tone: "bg-[#00ffff]" },
  { name: "Specularity", value: "1" },
  { name: "Definition" },
  { name: "Suppressed", value: "No", check: true },
  { name: "ID (Beta)", value: "20", tone: "bg-[#e8e7e3] text-[#555]" },
  { name: "Stiffness Behavior", value: "Flexible" },
  { name: "Coordinate System", value: "Default Coordinate System" },
  { name: "Reference Temperature", value: "By Environment" },
  { name: "Treatment", value: "None" },
  { name: "Material" },
  { name: "Assignment", value: "Structural Steel", check: true },
  { name: "Nonlinear Effects", value: "Yes" },
];

function Details() {
  return (
    <section className="flex h-[418px] shrink-0 flex-col">
      <PanelHeader title={'Details of "Geom\\Solid"'} />
      <div className="flex min-h-0 flex-1 overflow-hidden bg-white">
        <div className="min-w-0 flex-1 overflow-hidden">
          <table className="w-full table-fixed border-collapse text-[13px] leading-[18px] text-black">
            <colgroup>
              <col className="w-[17px]" />
              <col className="w-[158px]" />
              <col />
            </colgroup>
            <tbody>
              {props.map((p) => (
                <tr key={p.name} className="odd:h-[22px] even:h-[23px]">
                  <td className="p-0 align-middle">
                    {p.value === undefined && (
                      <button aria-label="Toggle" className="ml-[2px] flex size-[12px] items-center justify-center border border-[#999] bg-white">
                        <span className="h-px w-[6px] bg-black" />
                      </button>
                    )}
                  </td>
                  {p.value === undefined ? (
                    <th colSpan={2} className="border border-[#a0a0a0] px-[4px] py-0 text-left font-bold">
                      {p.name}
                    </th>
                  ) : (
                    <>
                      <td className="border border-[#a0a0a0] px-[4px] py-0 whitespace-nowrap">
                        <label className="flex items-center gap-[5px]">
                          {p.check && <input type="checkbox" className="size-[15px] appearance-none border border-[#ccc] bg-white" />}
                          {p.name}
                        </label>
                      </td>
                      <td className={clsx("border border-[#a0a0a0] px-[4px] py-0", p.tone)}>{p.value}</td>
                    </>
                  )}
                </tr>
              ))}
            </tbody>
          </table>
        </div>
        <div className="ml-[2px] flex w-[20px] flex-col items-center bg-[#f0f0f0] pr-px">
          <Svg className="my-[7px] h-[6px] w-[10px]" box="0 0 10 6">
            <path d="M1 5l4-4 4 4" stroke="#555" strokeWidth="2" />
          </Svg>
          <span className="h-[216px] w-full bg-[#cdcdcd]" />
          <Svg className="mt-auto mb-[7px] h-[6px] w-[10px]" box="0 0 10 6">
            <path d="M1 1l4 4 4-4" stroke="#555" strokeWidth="2" />
          </Svg>
        </div>
      </div>
      <div className="flex h-[24px] shrink-0 items-stretch border-t border-[#cccedb] pb-[2px] text-[#555]">
        <button className="w-[58px] border-r border-[#cccedb] bg-[#f8f8fa] text-[#0e70c0]">Details</button>
        <button className="ml-[8px]">Section Planes</button>
      </div>
    </section>
  );
}

/* ---------- graphics toolbar ---------- */

function FilterCube({ face, mesh }: { face: "none" | "corner" | "top" | "all"; mesh?: boolean }) {
  return (
    <Svg className="h-[17px] w-[18px]">
      <path
        d="M1 2l3-1h11l4 5v13H6l-5-4z"
        fill={mesh ? "#a9ccfb" : face === "all" ? "#0f0" : "#fff"}
        stroke={DARK}
        strokeWidth="1.500"
      />
      {face === "top" && <path d="M2 2h13l4 4H6z" fill="#0f0" />}
      {face === "corner" && <circle cx="5" cy="5" r="3" fill="#19c519" />}
      {face === "all" && mesh && <path d="M6 6h9v8H6z" fill="#19c519" />}
      <path d="M1 2l5 4h13M6 6v13" stroke={DARK} strokeWidth="1.400" />
      {mesh && <path d="M10 6v13M15 6v13M6 10h13M6 15h13" stroke="#345" strokeWidth=".9" />}
      <path d="M16 16l-5-6" stroke="#333" strokeWidth="1.500" />
      <path d="M10 9l4 1-3 3z" fill="#333" />
    </Svg>
  );
}

function Divider() {
  return <span className="mx-[8px] h-[24px] w-px shrink-0 bg-[#cccedb]" />;
}

function GraphicsToolbar() {
  const frame = "flex h-[27px] w-[27px] shrink-0 items-center justify-center border border-[#3d9bf5] bg-[#e4e6ec]";
  return (
    <div className="flex h-[32px] shrink-0 items-center overflow-hidden bg-[#eeeef2] pl-[13px] text-[#333]">
      <Grip />
      <div className="ml-[14px] flex shrink-0 items-center gap-[10px]">
        <Lens kind="back" />
        <Lens kind="next" muted />
      </div>
      <span className="mx-[4px] ml-[6px] h-[24px] w-px bg-[#cccedb]" />
      <button className={frame} aria-label="Shaded exterior and edges">
        <Cube top="#999" left="#5a5a5a" right="#6e6e6e" />
      </button>
      <div className="ml-[5px] flex shrink-0 items-center gap-[10px]">
        <Cube top="#bbb" left="#888" right="#666" stroke="#999" />
        <Svg>
          <path d="M9 4l4-3 5 3v6l-4 1-5-3z" fill="#fff" stroke={DARK} strokeWidth="1.300" />
          <path d="M2 11l4-3 5 3v6l-4 2-5-3z" fill={GOLD} stroke={DARK} strokeWidth="1.300" />
          <path d="M3 6l3-4M14 18l3-3" stroke={DARK} strokeWidth="1.500" />
        </Svg>
      </div>
      <Divider />
      <div className="flex shrink-0 items-center gap-[10px]">
        <MeshSquares />
        <MeshSquares muted />
      </div>
      <Divider />
      <Svg>
        <path d="M3 6a8 8 0 0 1 14 0M17 14a8 8 0 0 1-14 0" stroke={DARK} strokeWidth="1.800" />
        <path d="M0 12h6L2 7zM20 8h-6l4 5z" fill={GOLD} />
      </Svg>
      <Caret className="mx-[7px] h-[5px] w-[8px] text-[#777]" />
      <div className="flex shrink-0 items-center gap-[10px]">
        <Svg>
          <path d="M10 0l4 5H6zM10 20l4-5H6zM0 10l5-4v8zM20 10l-5-4v8z" fill={GOLD} />
          <path d="M10 7v1M10 12v1M7 10h1M12 10h1" stroke={DARK} strokeWidth="2" />
        </Svg>
        <Lens kind="updown" />
        <Lens kind="plus" />
        <Lens kind="blue" />
        <Lens kind="green" />
        <Lens kind="updown" />
      </div>
      <span className="mx-[7px] h-[24px] w-px shrink-0 bg-[#cccedb]" />
      <span>Select</span>
      <button className="ml-[9px] flex items-center gap-[3px]">
        <Svg className="h-[18px] w-[19px]">
          <path d="M0 0h8v8H0z" fill="#f00" />
          <path d="M7 5l12 8-5 1 3 5-3 1-2-5-4 3z" fill={DARK} />
        </Svg>
        Mode
        <Caret className="h-[5px] w-[7px] text-[#777]" />
      </button>
      <button className={clsx(frame, "ml-[11px]")} aria-label="Smart select">
        <Svg className="size-[22px]">
          <path d="M1 9V1h8M11 9V1h8M1 19v-8h8M4 9V4h4M14 9V4h4M4 19v-5h4" stroke={DARK} strokeWidth="1.300" />
          <path d="M14 2h5v4h-3z" fill="#0e0" />
          <path d="M6 4h3v3H6zM3 13h4v3H3z" fill="#1a9a1a" />
          <path d="M13 13l5 6" stroke="#333" strokeWidth="1.600" />
          <path d="M12 12l4 1-3 3z" fill="#333" />
        </Svg>
      </button>
      <div className="ml-[6px] flex shrink-0 items-center gap-[10px]">
        <FilterCube face="none" />
        <FilterCube face="corner" />
        <FilterCube face="top" />
        <FilterCube face="all" />
        <FilterCube face="none" mesh />
        <FilterCube face="top" mesh />
        <FilterCube face="all" mesh />
        <Svg className="h-[18px] w-[20px]">
          <path d="M1 1l3 4M4 1L1 5M8 1l1 2 1-2M9 3v2M15 1h3l-3 4h3" stroke="#555" />
          <path d="M10 7l5 4-4 1v7" stroke={GOLD} strokeWidth="2" />
        </Svg>
        <Svg>
          <path d="M1 1h14l4 4-4 4H1z" fill="#fff" stroke={DARK} strokeWidth="1.500" />
          <path d="M5 3v4M8 3h2v4H8zM12 3h2v4h-2z" stroke={DARK} />
          <path d="M7 10h5l-3 9z" fill={GOLD} />
        </Svg>
        <Svg>
          <path d="M1 2h14l4 6-4 7H1z" fill="#ddd" stroke="#aaa" strokeWidth="1.500" />
          <path d="M4 11l2-6 2 6M10 5v6h3V8h-3" stroke="#999" />
        </Svg>
      </div>
      <span className="mx-[7px] h-[24px] w-px shrink-0 bg-[#cccedb]" />
      <Svg>
        <path d="M1 9l5-4 4 3 8-6" stroke="#aaa" strokeWidth="1.500" />
        <path d="M1 16h18M3 13v5M16 13v5" stroke="#bbb" strokeWidth="1.500" />
      </Svg>
      <Divider />
      <Svg>
        <path d="M2 1h16v18H2z" fill="#f0c23c" stroke="#9a7510" strokeWidth="2" />
      </Svg>
      <div className="mr-[75px] ml-auto flex shrink-0 items-center gap-[14px] pl-[10px]">
        <button className="flex items-center gap-[3px]">
          Extend
          <Caret className="h-[5px] w-[7px] text-[#777]" />
        </button>
        <button className="flex items-center gap-[3px]">
          <Svg className="mr-[2px] size-[18px]">
            <path d="M10 19C6 12 4 10 4 6.500a6 6 0 0 1 12 0C16 10 14 12 10 19z" fill={GOLD} />
            <circle cx="10" cy="6.500" r="2" fill="#fff" />
          </Svg>
          Select By
          <Caret className="h-[5px] w-[7px] text-[#777]" />
        </button>
        <button className="flex items-center gap-[3px]">
          <Svg>
            <path d="M7 6l4-3h8v11l-3 4H7z" fill="#0d0" stroke="#353" strokeWidth="1.300" />
            <path d="M7 6h9v12M16 6l3-3" stroke="#353" strokeWidth="1.300" />
            <path d="M0 9h6M4 6l3 3-3 3" stroke={GOLD} strokeWidth="2" />
          </Svg>
          Convert
          <Caret className="h-[5px] w-[7px] text-[#777]" />
        </button>
      </div>
    </div>
  );
}

/* ---------- model view ---------- */

function ModelView() {
  return (
    <section className="relative min-h-0 flex-1 overflow-hidden bg-white">
      <div className="pt-[16px] pl-[18px] text-black">
        <div className="text-[15px] leading-[20px] font-bold">Geom\Solid</div>
        <div className="leading-[18px]">3/31/2023 8:24 PM</div>
      </div>
      <svg viewBox="435 204 1482 533" className="absolute inset-0 h-full w-full" aria-label="Model">
        <g strokeWidth="1.500" strokeLinejoin="round" stroke="#00e6a0">
          <path d="M889 425L1098 304l248 144-209 121z" fill="#00c48a" />
          <path d="M889 425l248 144v75L889 500z" fill="#004d36" />
          <path d="M1137 569l209-121v75l-209 121z" fill="#00a876" />
        </g>
        <g strokeWidth="1.500" strokeLinejoin="round" stroke="#f07800">
          <path d="M1009 419l209-121 248 143-209 121z" fill="#c46200" />
          <path d="M1009 419l248 143v75l-248-143z" fill="#4c2600" />
          <path d="M1257 562l209-121v76l-209 120z" fill="#a65200" />
        </g>
        <g stroke="#222">
          <path d="M947 688h461v10H947z" fill="#fff" />
          <path d="M947 688h115v10H947zM1177 688h116v10h-116z" fill="#000" />
        </g>
        <g fontSize="14" fill="#111" textAnchor="middle">
          <text x="946" y="683">0.00</text>
          <text x="1176" y="683">25.00</text>
          <text x="1408" y="683">50.00</text>
          <text x="1446" y="683">(mm)</text>
          <text x="1061" y="713">12.50</text>
          <text x="1293" y="713">37.50</text>
        </g>
        <path d="M1811 640v-48" stroke="#0b6b0b" strokeWidth="5" />
        <path d="M1811 576l8 18c-3 3-13 3-16 0z" fill="#067d06" />
        <path d="M1811 640l42 23" stroke="#b00000" strokeWidth="5" />
        <path d="M1867 671l-19 1c-1-6 3-13 8-15z" fill="#cc0000" />
        <path d="M1811 640l-42 24" stroke="#0a0ac0" strokeWidth="5" />
        <path d="M1756 672l19-1c1-6-3-13-8-14z" fill="#0000cc" />
        <circle cx="1811" cy="640" r="8" fill="#0fa8a8" />
        <circle cx="1809" cy="637" r="5" fill="#2cd2d2" />
        <g fontSize="15" textAnchor="middle" className="font-['Liberation_Sans',sans-serif]">
          <text x="1815" y="566" fill="#1eb51e">
            Y
          </text>
          <text x="1879" y="677" fill="#ff2020">
            X
          </text>
          <text x="1751" y="677" fill="#2020ff">
            Z
          </text>
        </g>
      </svg>
    </section>
  );
}

/* ---------- messages ---------- */

const filters = [
  { label: "Show Errors", count: "(0)" },
  { label: "Show Warnings", count: "(0)" },
  { label: "Show Info", count: "(0)" },
  { label: "Merge Messages" },
  { label: "Pop-up Messages" },
];

function Messages() {
  const head = "border-r border-b-2 border-[#888] bg-[#f0f0f0] px-[4px] py-0 text-left font-normal";
  return (
    <section className="flex h-[268px] shrink-0 flex-col bg-[#eeeef2]">
      <div className="mt-[3px] border-t-2 border-[#d9dae4]">
        <PanelHeader title="Messages" square={false} />
      </div>
      <div className="flex h-[32px] shrink-0 items-center pl-[13px] text-[#333]">
        <Grip />
        <div className="ml-[13px] flex items-center gap-[11px]">
          {filters.map((f) => (
            <label key={f.label} className="flex items-center gap-[8px]">
              <span className="relative flex size-[15px]">
                <input type="checkbox" defaultChecked className="size-[15px] appearance-none border border-[#cccedb] bg-white" />
                <Svg className="pointer-events-none absolute inset-[2px] size-[11px]" box="0 0 11 11">
                  <path d="M1 5l3 4 6-8" stroke="#555" strokeWidth="1.800" />
                </Svg>
              </span>
              {f.label}
              {f.count && <span className="ml-[2px]">{f.count}</span>}
            </label>
          ))}
        </div>
        <Caret className="mt-[13px] ml-[8px] h-[5px] w-[9px] text-[#222]" />
      </div>
      <div className="min-h-0 flex-1 bg-[#a0a0a0]">
        <table className="h-[19px] table-fixed border-separate border-spacing-0 text-[13px] leading-[16px] text-black">
          <colgroup>
            <col className="w-[62px]" />
            <col className="w-[581px]" />
            <col className="w-[382px]" />
            <col className="w-[275px]" />
          </colgroup>
          <thead>
            <tr>
              <th className={head} aria-label="Severity" />
              <th className={head}>Text</th>
              <th className={head}>Association</th>
              <th className={head}>Timestamp</th>
            </tr>
          </thead>
        </table>
      </div>
      <div className="flex h-[24px] shrink-0 border-t border-[#cccedb] pb-[2px] text-[#555]">
        <button className="px-[8px]">Graphics Annotations</button>
        <button className="border-x border-[#cccedb] bg-[#f8f8fa] px-[7px] text-[#0e70c0]">Messages</button>
      </div>
    </section>
  );
}

function StatusBar() {
  return (
    <footer className="flex h-[26px] shrink-0 items-center border-b border-[#1c4a6a] bg-[#007acc] pr-[7px] pl-[10px] text-white">
      <span className="flex-1">Default setting that displays the edges of the model according to the colors of the model’s bodies.</span>
      <span className="mr-[22px]">Messages pane</span>
      <span className="mr-[29px]">No Selection</span>
      <Caret className="mr-[9px] h-[6px] w-[11px] rotate-180" />
      <span className="mr-[22px]">Metric (mm, kg, N, s, mV, mA)</span>
      <span className="mr-[15px]">Degrees</span>
      <span className="mr-[15px]">rad/s</span>
      <span>Celsius</span>
    </footer>
  );
}

/* ---------- overlays ---------- */

const menu = [
  { label: "By Body Color", kind: "body" },
  { label: "By Connection", kind: "connection" },
  { label: "By Body Connection", kind: "muted" },
  { label: "Black", kind: "black" },
];

function ColorMenu() {
  return (
    <div
      role="menu"
      className="absolute top-[145px] left-[1381px] w-[211px] border border-[#cccedb] bg-[#f6f6f6] text-[#333] shadow-[5px_5px_3px_#0008]"
    >
      {menu.map((m, i) => (
        <button
          key={m.kind}
          role="menuitem"
          className={clsx(
            "flex h-[31px] w-full items-center pl-[3px]",
            i === 0 && "bg-[#c9def5]",
            m.kind === "muted" && "text-[#a6a6a6]",
          )}
        >
          <span className={clsx("flex size-[26px] items-center justify-center", i === 0 && "border border-[#3390df]")}>
            <Swatches className="h-[10px] w-[18px]" kind={m.kind} />
          </span>
          <span className={clsx("ml-[11px] flex h-full flex-1 items-center", i > 0 && "border-t border-[#e0e0e4]")}>{m.label}</span>
        </button>
      ))}
    </div>
  );
}

function Tooltip() {
  return (
    <div
      role="tooltip"
      className="absolute top-[190px] left-[1559px] flex h-[146px] w-[299px] flex-col border border-black bg-[#fafafa] px-[6px] text-[#333] shadow-[4px_4px_3px_#0008]"
    >
      <b className="pt-[5px] leading-[20px] text-black">By Body Color</b>
      <div className="flex items-center gap-[8px] pt-[5px] pl-[6px]">
        <Swatches className="h-[26px] w-[54px]" />
        <p className="leading-[19px] whitespace-nowrap">
          Default setting that displays the
          <br />
          edges of the model according to
          <br />
          the colors of the model’s bodies.
        </p>
      </div>
      <hr className="mt-[13px] border-[#999]" />
      <div className="flex items-center gap-[5px] pt-[16px] pl-[4px] font-bold text-black">
        <Svg>
          <circle cx="10" cy="10" r="9" stroke="#777" strokeWidth="1.500" fill="#fff" />
          <path d="M10 4v2.500M8 8.500h2.500V15M7.500 15h5.500" stroke="#4a90e8" strokeWidth="2.200" />
        </Svg>
        Press F1 for help.
      </div>
    </div>
  );
}

function Callout({ n, className }: { n: string; className: string }) {
  return (
    <div
      className={clsx(
        "absolute flex h-[47px] w-[64px] items-center justify-center border-[5px] border-[#cc0000] bg-white pb-[4px] text-[26px] text-[#cc0000] shadow-[3px_3px_3px_#0006] text-shadow-[3px_3px_2px_#0006] font-['Noto_Sans',sans-serif]",
        className,
      )}
    >
      {n}
    </div>
  );
}

const redFrame = "pointer-events-none absolute border-[5px] border-[#ff0000] shadow-[3px_3px_3px_#0006,inset_3px_3px_3px_#0005]";

export default function App() {
  return (
    <div className="relative flex h-screen w-full flex-col overflow-hidden bg-[#eeeef2] text-[14px] leading-[18px] text-[#444] font-['Open_Sans','Noto_Sans',sans-serif]">
      <TitleBar />
      <TabRow />
      <Ribbon />
      <main className="flex min-h-0 flex-1 gap-[5px]">
        <div className="flex w-[430px] shrink-0 flex-col gap-[5px]">
          <Outline />
          <Details />
        </div>
        <div className="flex min-w-0 flex-1 flex-col">
          <GraphicsToolbar />
          <ModelView />
          <Messages />
        </div>
      </main>
      <StatusBar />

      <ColorMenu />
      <Tooltip />
      <svg viewBox="0 0 12 20" className="absolute top-[166px] left-[1558px] h-[20px] w-[12px]" aria-hidden="true">
        <path d="M1 1v15l3.500-3 2.500 6 2.500-1L7 12h4.500z" fill="#fff" stroke="#111" />
      </svg>

      <div className={clsx(redFrame, "top-[44px] left-[1369px] h-[303px] w-[491px]")} />
      <div className={clsx(redFrame, "top-[287px] left-[29px] h-[67px] w-[218px]")} />
      <div className={clsx(redFrame, "top-[586px] left-0 h-[191px] w-[431px]")} />
      <Callout n="1" className="top-[301px] left-[279px]" />
      <Callout n="2" className="top-[520px] left-[346px]" />
      <Callout n="3" className="top-[226px] left-[1290px]" />
    </div>
  );
}
